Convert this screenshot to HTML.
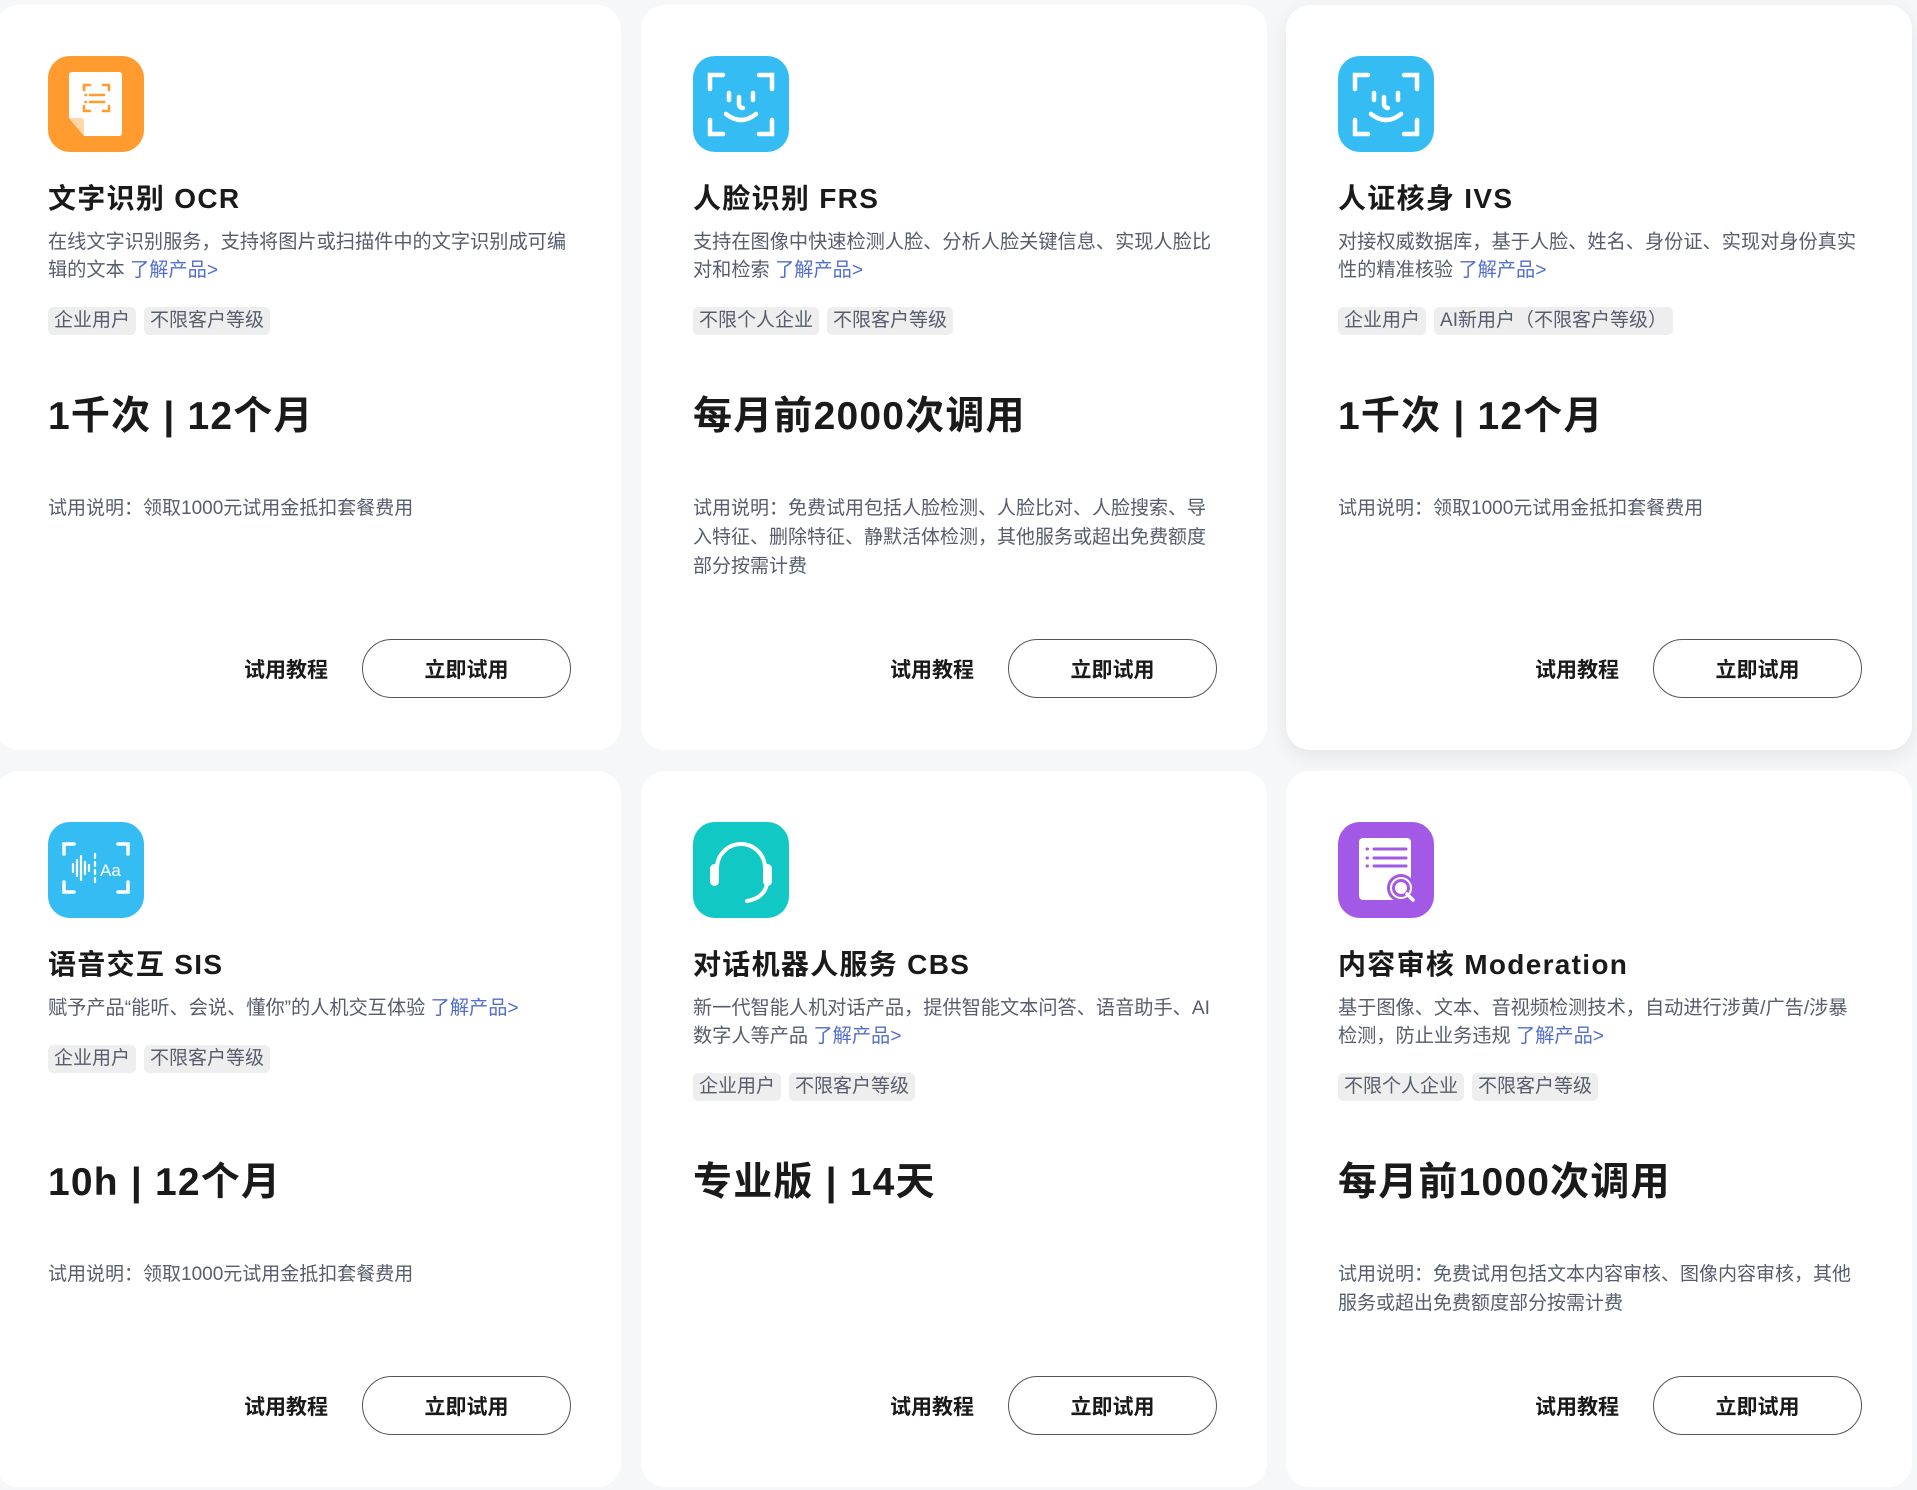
<!DOCTYPE html>
<html><head><meta charset="utf-8"><style>
*{margin:0;padding:0;box-sizing:border-box}
body{width:1917px;height:1490px;background:#f6f7f9;position:relative;overflow:hidden;font-family:"Liberation Sans","Noto Sans CJK SC",sans-serif}
.card{position:absolute;background:#fff;border-radius:24px;width:626px}
.r1{top:5px;height:745px}.r2{top:771px;height:716px}
.c1{left:-5px}.c2{left:641px}.c3{left:1286px}
.shadow{box-shadow:0 6px 20px rgba(0,0,0,.08)}
.ico{position:absolute;left:53px;top:51px;width:96px;height:96px}
.c2 .ico,.c3 .ico{left:52px}
.body{position:absolute;left:53px;top:176px;width:524px}
.c2 .body,.c3 .body{left:52px}
h3{font-size:28px;font-weight:bold;color:#1a1a1a;letter-spacing:1.3px;line-height:36px;height:36px}
.desc{margin-top:12px;font-size:19.2px;line-height:28px;color:#575d6c}
.desc a{color:#526ecc;text-decoration:none}
.tags{margin-top:22px;display:flex;gap:8px}
.tags span{background:#eeeeee;color:#575d6c;font-size:19px;line-height:27px;height:28px;padding:0 6px;border-radius:5px}
.price{position:absolute;left:53px;top:388px;font-size:39px;font-weight:bold;color:#1a1a1a;line-height:48px;letter-spacing:1.2px}
.c2 .price,.c3 .price{left:52px}
.note{position:absolute;left:53px;top:489px;width:522px;font-size:19px;line-height:29px;color:#575d6c}
.c2 .note,.c3 .note{left:52px}
.btns{position:absolute;right:50px;bottom:52px;display:flex;align-items:center}
.tut{font-size:21px;font-weight:bold;color:#1a1a1a;margin-right:34px}
.try{width:209px;height:59px;border:1.5px solid #555;border-radius:30px;font-size:21px;font-weight:bold;color:#1a1a1a;display:flex;align-items:center;justify-content:center}
</style></head><body>

<div class="card r1 c1">
<svg class="ico" viewBox="0 0 96 96"><rect width="96" height="96" rx="22" fill="#ff9b2f"/><path d="M24 16h47a3 3 0 0 1 3 3v58a3 3 0 0 1-3 3H36L21 62V19a3 3 0 0 1 3-3z" fill="#fff"/><path d="M21 62l15 18V65a3 3 0 0 0-3-3z" fill="#ffd7a8"/><g fill="none" stroke="#ff9b2f" stroke-width="2.6" stroke-linecap="round"><path d="M36 34v-5h6M55 29h6v5M36 50v5h6M55 55h6v-5"/><path d="M42 39h14M42 46h14"/><path d="M37.5 39h.5M37.5 46h.5"/></g></svg>
<div class="body"><h3>文字识别 OCR</h3><div class="desc">在线文字识别服务，支持将图片或扫描件中的文字识别成可编辑的文本 <a>了解产品&gt;</a></div><div class="tags"><span>企业用户</span><span>不限客户等级</span></div></div>
<div class="price">1千次 | 12个月</div>
<div class="note">试用说明：领取1000元试用金抵扣套餐费用</div>
<div class="btns"><span class="tut">试用教程</span><span class="try">立即试用</span></div>
</div>

<div class="card r1 c2">
<svg class="ico" viewBox="0 0 96 96"><rect width="96" height="96" rx="22" fill="#35bdf3"/><g fill="none" stroke="#fff" stroke-width="4.5" stroke-linecap="round"><path d="M17 33V19h13M66 19h13v14M17 64v14h13M66 78h13V64"/><path d="M36 37v7M60 37v7"/><path d="M46 41v8a4 4 0 0 0 4 3"/><path d="M33 58q15 12 30 0"/></g></svg>
<div class="body"><h3>人脸识别 FRS</h3><div class="desc">支持在图像中快速检测人脸、分析人脸关键信息、实现人脸比对和检索 <a>了解产品&gt;</a></div><div class="tags"><span>不限个人企业</span><span>不限客户等级</span></div></div>
<div class="price">每月前2000次调用</div>
<div class="note">试用说明：免费试用包括人脸检测、人脸比对、人脸搜索、导入特征、删除特征、静默活体检测，其他服务或超出免费额度部分按需计费</div>
<div class="btns"><span class="tut">试用教程</span><span class="try">立即试用</span></div>
</div>

<div class="card r1 c3 shadow">
<svg class="ico" viewBox="0 0 96 96"><rect width="96" height="96" rx="22" fill="#35bdf3"/><g fill="none" stroke="#fff" stroke-width="4.5" stroke-linecap="round"><path d="M17 33V19h13M66 19h13v14M17 64v14h13M66 78h13V64"/><path d="M36 37v7M60 37v7"/><path d="M46 41v8a4 4 0 0 0 4 3"/><path d="M33 58q15 12 30 0"/></g></svg>
<div class="body"><h3>人证核身 IVS</h3><div class="desc">对接权威数据库，基于人脸、姓名、身份证、实现对身份真实性的精准核验 <a>了解产品&gt;</a></div><div class="tags"><span>企业用户</span><span>AI新用户（不限客户等级）</span></div></div>
<div class="price">1千次 | 12个月</div>
<div class="note">试用说明：领取1000元试用金抵扣套餐费用</div>
<div class="btns"><span class="tut">试用教程</span><span class="try">立即试用</span></div>
</div>

<div class="card r2 c1">
<svg class="ico" viewBox="0 0 96 96"><rect width="96" height="96" rx="22" fill="#35bdf3"/><g fill="none" stroke="#fff" stroke-width="3.5" stroke-linecap="round"><path d="M16 32V22h10M70 22h10v10M16 60v10h10M70 70h10V60"/></g><g fill="none" stroke="#fff" stroke-width="2.2" stroke-linecap="round"><path d="M25 42v8M29 38v16M33 34v24M37 40v12M41 43v6"/><path d="M47 32v4M47 40v4M47 48v4M47 56v4"/></g><text x="52" y="54" font-family="Liberation Sans,sans-serif" font-size="17" fill="#fff">Aa</text></svg>
<div class="body"><h3>语音交互 SIS</h3><div class="desc">赋予产品“能听、会说、懂你”的人机交互体验 <a>了解产品&gt;</a></div><div class="tags"><span>企业用户</span><span>不限客户等级</span></div></div>
<div class="price">10h | 12个月</div>
<div class="note">试用说明：领取1000元试用金抵扣套餐费用</div>
<div class="btns"><span class="tut">试用教程</span><span class="try">立即试用</span></div>
</div>

<div class="card r2 c2">
<svg class="ico" viewBox="0 0 96 96"><rect width="96" height="96" rx="22" fill="#12c8c4"/><g fill="none" stroke="#fff" stroke-width="4" stroke-linecap="round"><path d="M24 50V46a24 24 0 0 1 48 0v4"/><path d="M74 62q-3 14-20 17"/></g><rect x="17" y="42" width="9" height="22" rx="4.5" fill="#fff"/><rect x="70" y="42" width="9" height="22" rx="4.5" fill="#fff"/></svg>
<div class="body"><h3>对话机器人服务 CBS</h3><div class="desc">新一代智能人机对话产品，提供智能文本问答、语音助手、AI数字人等产品 <a>了解产品&gt;</a></div><div class="tags"><span>企业用户</span><span>不限客户等级</span></div></div>
<div class="price">专业版 | 14天</div>
<div class="note"></div>
<div class="btns"><span class="tut">试用教程</span><span class="try">立即试用</span></div>
</div>

<div class="card r2 c3">
<svg class="ico" viewBox="0 0 96 96"><rect width="96" height="96" rx="22" fill="#a259e6"/><rect x="21" y="16" width="52" height="62" rx="4" fill="#fff"/><g stroke="#a259e6" stroke-width="3" stroke-linecap="round"><path d="M36 27h32M36 36h32M36 44h32M29 27h.5M29 36h.5M29 44h.5"/></g><circle cx="63" cy="66" r="14" fill="#a259e6"/><circle cx="63" cy="66" r="11" fill="#fff"/><circle cx="63" cy="66" r="7.5" fill="none" stroke="#a259e6" stroke-width="3"/><path d="M69 72l6 6" stroke="#fff" stroke-width="3.5" stroke-linecap="round"/></svg>
<div class="body"><h3>内容审核 Moderation</h3><div class="desc">基于图像、文本、音视频检测技术，自动进行涉黄/广告/涉暴检测，防止业务违规 <a>了解产品&gt;</a></div><div class="tags"><span>不限个人企业</span><span>不限客户等级</span></div></div>
<div class="price">每月前1000次调用</div>
<div class="note">试用说明：免费试用包括文本内容审核、图像内容审核，其他服务或超出免费额度部分按需计费</div>
<div class="btns"><span class="tut">试用教程</span><span class="try">立即试用</span></div>
</div>

</body></html>
